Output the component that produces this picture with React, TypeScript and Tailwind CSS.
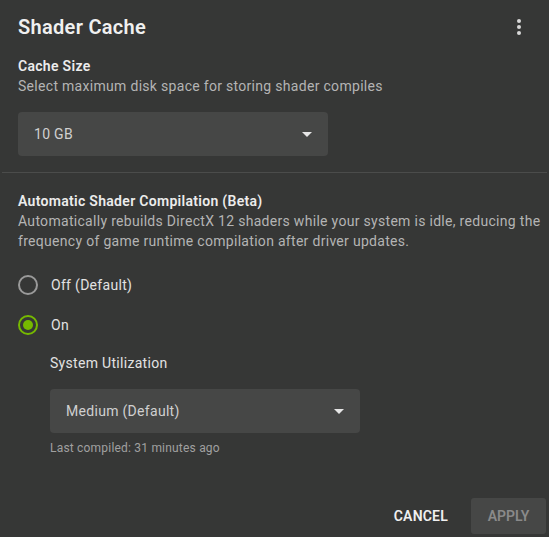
import React from 'react';

const font = { fontFamily: 'Roboto, "Liberation Sans", sans-serif' };

const Caret = () => (
  <svg width="10" height="5" viewBox="0 0 10 5" className="fill-[#e6e6e6]">
    <path d="M0 0h10L5 5z" />
  </svg>
);

const Select: React.FC<{ value: string }> = ({ value }) => (
  <div className="flex h-[44px] w-[310px] items-center justify-between rounded-[4px] bg-[#464746] pl-4 pr-[16px]">
    <span className="text-[14px] tracking-[0.3px] text-[#d0d0d0]">{value}</span>
    <Caret />
  </div>
);

const Radio: React.FC<{ label: string; checked?: boolean }> = ({ label, checked }) => (
  <div className="flex h-[40px] items-center gap-[13px]">
    {checked ? (
      <div className="flex h-[20px] w-[20px] items-center justify-center rounded-full border-2 border-[#76b900]">
        <div className="h-[10px] w-[10px] rounded-full bg-[#76b900]" />
      </div>
    ) : (
      <div className="h-[20px] w-[20px] rounded-full border-2 border-[#9a9a9a]" />
    )}
    <span className="text-[14px] tracking-[0.3px] text-[#e2e2e2]">{label}</span>
  </div>
);

export default function App() {
  return (
    <div style={font} className="h-[537px] w-[549px] bg-[#363736] text-white">
      <div className="flex items-center justify-between pl-[18px] pr-[28px] pt-[12px]">
        <h1 className="text-[20px] font-semibold tracking-[0.3px] text-[#f0f0f0]">Shader Cache</h1>
        <div className="flex flex-col gap-[2px]">
          <span className="h-[4px] w-[4px] rounded-full bg-[#d8d8d8]" />
          <span className="h-[4px] w-[4px] rounded-full bg-[#d8d8d8]" />
          <span className="h-[4px] w-[4px] rounded-full bg-[#d8d8d8]" />
        </div>
      </div>

      <div className="px-[18px] pt-[14px] tracking-[0.3px]">
        <div className="text-[14px] font-semibold leading-[20px] text-[#ececec]">Cache Size</div>
        <div className="text-[14px] leading-[20px] text-[#b4b4b4]">Select maximum disk space for storing shader compiles</div>
        <div className="pt-[16px]">
          <Select value="10 GB" />
        </div>
      </div>

      <div className="mx-[2px] mt-[16px] h-px bg-[#4b4c4b]" />

      <div className="pl-[18px] pr-[4px] pt-[18px] tracking-[0.3px]">
        <div className="text-[14px] font-semibold leading-[20px] text-[#ececec]">Automatic Shader Compilation (Beta)</div>
        <div className="text-[14px] leading-[20px] text-[#b4b4b4]">
          Automatically rebuilds DirectX 12 shaders while your system is idle, reducing the frequency of game runtime compilation after driver updates.
        </div>
        <div className="pt-[14px]">
          <Radio label="Off (Default)" />
          <Radio label="On" checked />
        </div>
        <div className="pl-[32px] pt-[8px]">
          <div className="text-[14px] leading-[20px] text-[#e2e2e2]">System Utilization</div>
          <div className="pt-[16px]">
            <Select value="Medium (Default)" />
          </div>
          <div className="pt-[7px] text-[12px] leading-[16px] tracking-[0.2px] text-[#a0a0a0]">Last compiled: 31 minutes ago</div>
        </div>
      </div>

      <div className="flex items-center justify-end gap-[23px] pr-[3px] pt-[42px]">
        <button className="text-[14px] font-semibold tracking-[0.2px] text-[#f0f0f0]">CANCEL</button>
        <button className="h-[36px] w-[75px] rounded-[3px] bg-[#464746] text-[14px] font-semibold text-[#8a8a8a]">APPLY</button>
      </div>
    </div>
  );
}
